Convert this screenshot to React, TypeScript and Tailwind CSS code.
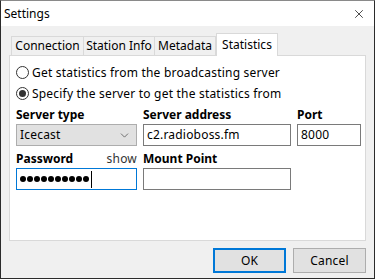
import { ChevronDown, X } from 'lucide-react';

const tabs = [
    { label: 'Connection', w: 'w-[73px]' },
    { label: 'Station Info', w: 'w-[72px]' },
    { label: 'Metadata', w: 'w-[62px]' },
];

function Radio({ checked, label }: { checked?: boolean; label: string }) {
    return (
        <label className="flex items-center gap-[3px] h-[21px]">
            <span className="w-[13px] h-[13px] rounded-full border border-[#333333] bg-white flex items-center justify-center">
                {checked && <span className="w-[7px] h-[7px] rounded-full bg-[#333333]" />}
            </span>
            <span>{label}</span>
        </label>
    );
}

export default function App() {
    return (
        <div
            className="w-[375px] h-[279px] flex flex-col bg-[#f0f0f0] border-x border-b border-t border-x-[#2b2b2b] border-b-[#2b2b2b] border-t-[#8a8a8a] text-[12px] tracking-[0.2px] text-black overflow-hidden"
            style={{ fontFamily: '"Noto Sans", "Segoe UI", sans-serif' }}
        >
            {/* title bar */}
            <div className="h-[25px] bg-white flex items-center justify-between pl-[3px] pr-[8px]">
                <span className="tracking-normal">Settings</span>
                <X size={14} strokeWidth={1.2} />
            </div>

            <div className="flex flex-col px-[8px] pt-[7px]">
                {/* tabs */}
                <div className="flex items-end h-[22px] pl-[2px] relative z-10 tracking-normal">
                    {tabs.map((t) => (
                        <div
                            key={t.label}
                            className={`${t.w} h-[19px] border border-b-0 border-[#d9d9d9] -ml-px first:ml-0 bg-[#f0f0f0] flex items-center justify-center`}
                        >
                            {t.label}
                        </div>
                    ))}
                    <div className="w-[62px] h-[23px] -mb-px border border-b-0 border-[#d9d9d9] bg-white flex items-start pt-[2px] justify-center">
                        Statistics
                    </div>
                </div>

                {/* panel */}
                <div className="h-[186px] bg-white border border-[#d9d9d9] pl-[6px] pt-[6px]">
                    <Radio label="Get statistics from the broadcasting server" />
                    <Radio checked label="Specify the server to get the statistics from" />

                    <div className="grid grid-cols-[121px_148px_64px] gap-x-[6px] mt-[2px]">
                        <span className="font-bold tracking-normal h-[18px] leading-[18px]">Server type</span>
                        <span className="font-bold tracking-normal h-[18px] leading-[18px]">Server address</span>
                        <span className="font-bold tracking-normal h-[18px] leading-[18px]">Port</span>

                        <div className="h-[22px] bg-[#e1e1e1] border border-[#adadad] flex items-center justify-between pl-[3px] pr-[5px]">
                            <span>Icecast</span>
                            <ChevronDown size={13} strokeWidth={1.2} className="text-[#333333]" />
                        </div>
                        <div className="h-[22px] border border-[#7a7a7a] flex items-center pl-[3px]">c2.radioboss.fm</div>
                        <div className="h-[22px] border border-[#7a7a7a] flex items-center pl-[3px]">8000</div>

                        <div className="flex items-center justify-between h-[22px] pt-[4px]">
                            <span className="font-bold tracking-normal">Password</span>
                            <span className="text-[#333333]">show</span>
                        </div>
                        <span className="font-bold tracking-normal h-[22px] pt-[4px] flex items-center">Mount Point</span>
                        <span />

                        <div className="h-[22px] border border-[#0078d7] flex items-center pl-[3px]">
                            {Array.from({ length: 10 }).map((_, i) => (
                                <span key={i} className="w-[6px] h-[6px] rounded-full bg-black mr-[1px]" />
                            ))}
                            <span className="w-px h-[17px] bg-black ml-[1px]" />
                        </div>
                        <div className="h-[22px] border border-[#7a7a7a]" />
                        <span />
                    </div>
                </div>

                {/* buttons */}
                <div className="flex justify-end gap-[7px] pt-[7px]">
                    <button className="w-[73px] h-[25px] bg-[#e1e1e1] border-2 border-[#0078d7]">OK</button>
                    <button className="w-[73px] h-[25px] bg-[#e1e1e1] border border-[#adadad]">Cancel</button>
                </div>
            </div>
        </div>
    );
}
